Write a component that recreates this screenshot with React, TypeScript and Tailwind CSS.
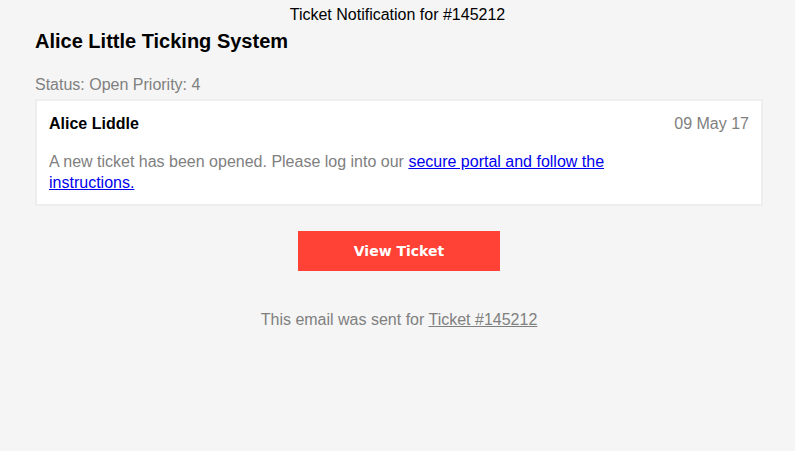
export default function App() {
  return (
    <div className="min-h-[451px] w-full bg-[#f5f5f5] font-['Liberation_Sans',Arial,sans-serif]">
      <div className="text-center text-[16px] leading-[18px] pt-[6px] text-black">Ticket Notification for #145212</div>
      <div className="ml-[35px] w-[728px]">
        <h1 className="text-[20px] font-bold leading-[24px] mt-[5px] text-black">Alice Little Ticking System</h1>
        <div className="mt-[23px] text-[16px] leading-[18px] text-[#808080]">Status: Open Priority: 4</div>
        <div className="mt-[5px] border-2 border-[#eeeeee] bg-white px-[12px] pt-[12px] pb-[11px]">
          <div className="flex justify-between items-start">
            <div className="text-[16px] font-bold leading-[22px] text-black">Alice Liddle</div>
            <div className="text-[16px] leading-[22px] text-[#808080]">09 May 17</div>
          </div>
          <p className="mt-[16px] w-[580px] text-[16px] leading-[21px] text-[#808080]">
            A new ticket has been opened. Please log into our{" "}
            <a href="#" className="text-[#0000ee] underline">secure portal and follow the instructions.</a>
          </p>
        </div>
        <div className="flex justify-center mt-[25px]">
          <div className="w-[202px] h-[40px] bg-[#ff4136] flex items-center justify-center text-white font-bold text-[14px] font-['DejaVu_Sans',sans-serif]">View Ticket</div>
        </div>
        <div className="mt-[39px] text-center text-[16px] leading-[20px] text-[#808080]">
          This email was sent for <a href="#" className="underline text-[#808080]">Ticket #145212</a>
        </div>
      </div>
    </div>
  );
}
